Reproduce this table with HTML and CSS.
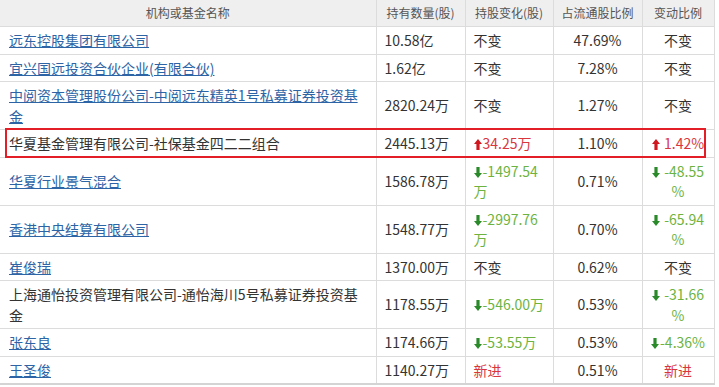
FILE: index.html
```html
<!DOCTYPE html>
<html lang="zh-CN">
<head>
<meta charset="utf-8">
<title>十大流通股东</title>
<link rel="stylesheet" href="styles.css">
</head>
<body>
<div class="wrap">
  <table class="holders">
    <colgroup>
      <col class="c-name"><col class="c-qty"><col class="c-chg"><col class="c-pct"><col class="c-rate">
    </colgroup>
    <thead>
      <tr><th>机构或基金名称</th><th>持有数量(股)</th><th>持股变化(股)</th><th>占流通股比例</th><th>变动比例</th></tr>
    </thead>
    <tbody>
      <tr><td><a href="#">远东控股集团有限公司</a></td><td>10.58亿</td><td>不变</td><td class="ctr">47.69%</td><td class="ctr">不变</td></tr>
      <tr><td><a href="#">宜兴国远投资合伙企业(有限合伙)</a></td><td>1.62亿</td><td>不变</td><td class="ctr">7.28%</td><td class="ctr">不变</td></tr>
      <tr><td><a href="#">中阅资本管理股份公司-中阅远东精英1号私募证券投资基金</a></td><td>2820.24万</td><td>不变</td><td class="ctr">1.27%</td><td class="ctr">不变</td></tr>
      <tr><td>华夏基金管理有限公司-社保基金四二二组合</td><td>2445.13万</td><td class="chg up"><svg class="arr" viewBox="0 0 8 11"><path d="M4 0L8 5H5.6V11H2.4V5H0Z"/></svg>34.25万</td><td class="ctr">1.10%</td><td class="ctr chg up"><svg class="arr" viewBox="0 0 8 11"><path d="M4 0L8 5H5.6V11H2.4V5H0Z"/></svg> 1.42%</td></tr>
      <tr><td><a href="#">华夏行业景气混合</a></td><td>1586.78万</td><td class="chg down"><svg class="arr" viewBox="0 0 8 11"><path d="M4 11L8 6H5.6V0H2.4V6H0Z"/></svg>-1497.54万</td><td class="ctr">0.71%</td><td class="ctr chg down"><svg class="arr" viewBox="0 0 8 11"><path d="M4 11L8 6H5.6V0H2.4V6H0Z"/></svg> -48.55<br>%</td></tr>
      <tr><td><a href="#">香港中央结算有限公司</a></td><td>1548.77万</td><td class="chg down"><svg class="arr" viewBox="0 0 8 11"><path d="M4 11L8 6H5.6V0H2.4V6H0Z"/></svg>-2997.76万</td><td class="ctr">0.70%</td><td class="ctr chg down"><svg class="arr" viewBox="0 0 8 11"><path d="M4 11L8 6H5.6V0H2.4V6H0Z"/></svg> -65.94<br>%</td></tr>
      <tr><td><a href="#">崔俊瑞</a></td><td>1370.00万</td><td>不变</td><td class="ctr">0.62%</td><td class="ctr">不变</td></tr>
      <tr><td>上海通怡投资管理有限公司-通怡海川5号私募证券投资基金</td><td>1178.55万</td><td class="chg down"><svg class="arr" viewBox="0 0 8 11"><path d="M4 11L8 6H5.6V0H2.4V6H0Z"/></svg>-546.00万</td><td class="ctr">0.53%</td><td class="ctr chg down"><svg class="arr" viewBox="0 0 8 11"><path d="M4 11L8 6H5.6V0H2.4V6H0Z"/></svg> -31.66<br>%</td></tr>
      <tr><td><a href="#">张东良</a></td><td>1174.66万</td><td class="chg down"><svg class="arr" viewBox="0 0 8 11"><path d="M4 11L8 6H5.6V0H2.4V6H0Z"/></svg>-53.55万</td><td class="ctr">0.53%</td><td class="ctr chg down"><svg class="arr" viewBox="0 0 8 11"><path d="M4 11L8 6H5.6V0H2.4V6H0Z"/></svg>-4.36%</td></tr>
      <tr><td><a href="#">王圣俊</a></td><td>1140.27万</td><td class="new">新进</td><td class="ctr">0.51%</td><td class="ctr new">新进</td></tr>
    </tbody>
  </table>
  <div class="mark"></div>
</div>
</body>
</html>
```
FILE: styles.css
```css
html, body {
  margin: 0;
  padding: 0;
  background: #fff;
}
body {
  font-family: "Noto Sans CJK SC", "Microsoft YaHei", sans-serif;
  color: #333;
}
.wrap {
  position: relative;
  width: 714px;
}
.holders {
  width: 714px;
  border-collapse: collapse;
  table-layout: fixed;
  font-size: 14px;
}
.c-name { width: 376px; }
.c-qty { width: 89px; }
.c-chg { width: 88px; }
.c-pct { width: 89px; }
.c-rate { width: 72px; }
.holders th {
  background: #efefef;
  color: #555;
  font-size: 12px;
  font-weight: normal;
  line-height: 20px;
  padding: 3px 0;
  text-align: center;
  border: 1px solid #dcdcdc;
  border-top: none;
}
.holders th:first-child, .holders td:first-child { border-left: none; }
.holders td {
  line-height: 20.5px;
  padding: 3px 8px 3px 8px;
  border: 1px solid #dcdcdc;
  vertical-align: middle;
  text-align: left;
}
.holders td:first-child { padding-left: 9px; padding-right: 12px; }
.holders td.ctr {
  text-align: center;
  padding-left: 2px;
  padding-right: 2px;
  white-space: nowrap;
}
.holders tbody tr:last-child td { border-bottom: 2px solid #d4d4d4; }
.holders a {
  color: #2d64a6;
  text-decoration: underline;
}
.chg {
  word-break: break-all;
}
.up { color: #d9363e; }
.up .arr { fill: #d0161e; }
.down { color: #6db33f; }
.down .arr { fill: #2a8a2a; }
.new { color: #d9363e; }
.arr {
  width: 8px;
  height: 11px;
  vertical-align: -1px;
  margin-right: 1px;
}
.mark {
  position: absolute;
  left: 5px;
  top: 128px;
  width: 697px;
  height: 26px;
  border: 2px solid #e41e26;
  pointer-events: none;
}
```
